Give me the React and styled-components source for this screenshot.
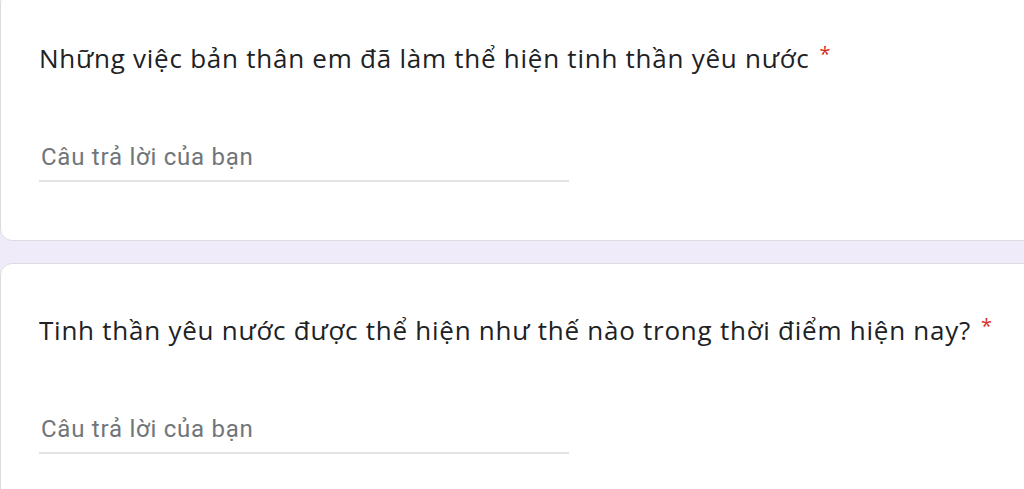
import React from "react";
import styled, { createGlobalStyle } from "styled-components";

const GlobalStyle = createGlobalStyle`
  html, body {
    margin: 0;
    padding: 0;
    background: #f0ebf8;
    overflow: hidden;
  }
  body {
    font-family: "Open Sans", "Roboto", sans-serif;
  }
`;

const Page = styled.main`
  display: flex;
  flex-direction: column;
  gap: 22px;
  margin-top: -9px;
  margin-right: -24px;
`;

const Card = styled.section`
  background: #ffffff;
  border: 1px solid #dadce0;
  border-radius: 12px;
  padding: 44px 36px 58px 38px;
  display: flex;
  flex-direction: column;
`;

const Title = styled.h2`
  margin: 0;
  font-family: "Open Sans", "Noto Sans", sans-serif;
  font-weight: 400;
  font-size: 26px;
  line-height: 36px;
  color: #202124;
  letter-spacing: 0.75px;
`;

const Required = styled.span`
  color: #d93025;
  padding-left: 10px;
  font-size: 20px;
  vertical-align: 7px;
`;

const Answer = styled.div`
  margin-top: 65px;
  width: 528px;
  padding: 0 0 7px 2px;
  border-bottom: 2px solid #e3e3e3;
  font-family: "Roboto", sans-serif;
  font-size: 24px;
  line-height: 32px;
  letter-spacing: 0.75px;
  color: #70757a;
`;

const questions = [
  "Những việc bản thân em đã làm thể hiện tinh thần yêu nước",
  "Tinh thần yêu nước được thể hiện như thế nào trong thời điểm hiện nay?",
];

export default function App() {
  return (
    <>
      <GlobalStyle />
      <Page>
        {questions.map((q) => (
          <Card key={q}>
            <Title>
              {q}
              <Required>*</Required>
            </Title>
            <Answer>Câu trả lời của bạn</Answer>
          </Card>
        ))}
      </Page>
    </>
  );
}
